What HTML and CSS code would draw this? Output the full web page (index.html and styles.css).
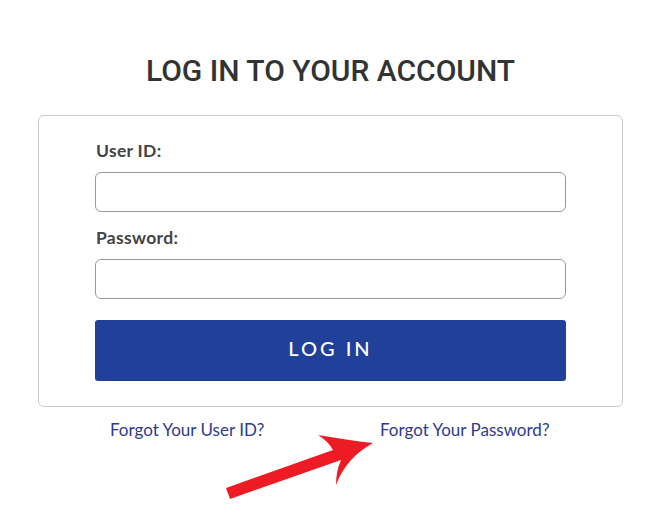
FILE: index.html
```html
<!DOCTYPE html>
<html>
<head>
<meta charset="utf-8">
<link rel="stylesheet" href="styles.css">
</head>
<body>
<div class="page">
  <h1 class="title">LOG IN TO YOUR ACCOUNT</h1>
  <form class="card">
    <label class="label" for="uid">User ID:</label>
    <input class="field" id="uid" type="text">
    <label class="label label-pw" for="pw">Password:</label>
    <input class="field" id="pw" type="password">
    <button class="btn" type="button">LOG IN</button>
  </form>
  <div class="links">
    <a class="link" href="#">Forgot Your User ID?</a>
    <a class="link" href="#">Forgot Your Password?</a>
  </div>
  <svg class="arrow" width="672" height="524" viewBox="0 0 672 524">
    <path d="M226 488 L333 450 Q 328 441 318 435 Q 347 440 373 443 Q 346 458 336 485 Q 336 471 341 460 L230 499 Z" fill="#ed1c24"/>
  </svg>
</div>
</body>
</html>
```
FILE: styles.css
```css
html, body {
  margin: 0;
  padding: 0;
  background: #fff;
}
.page {
  width: 585px;
  margin-left: 38px;
  padding-top: 51px;
}
.title {
  margin: 0 0 24px;
  text-align: center;
  font-family: Roboto, "Liberation Sans", sans-serif;
  font-weight: 500;
  font-size: 30px;
  line-height: 40px;
  color: #333;
}
.card {
  display: flex;
  flex-direction: column;
  border: 1px solid #ccc;
  border-radius: 6px;
  padding: 24px 56px 25px 56px;
  margin: 0;
}
.label {
  font-family: Lato, "Open Sans", sans-serif;
  font-weight: 700;
  font-size: 17.5px;
  letter-spacing: 0.3px;
  line-height: 22px;
  color: #444;
  padding-left: 1px;
  margin-bottom: 10px;
}
.label-pw {
  margin-top: 15px;
}
.field {
  box-sizing: border-box;
  height: 40px;
  border: 1px solid #999;
  border-radius: 6px;
  background: #fff;
  margin: 0;
  padding: 0 10px;
}
.btn {
  margin-top: 21px;
  height: 61px;
  border: 0;
  border-radius: 3px;
  background: #20409a;
  color: #fff;
  font-family: Lato, "Open Sans", sans-serif;
  font-weight: 500;
  font-size: 20px;
  letter-spacing: 3px;
  padding: 0 0 5px;
  cursor: pointer;
}
.links {
  display: grid;
  grid-template-columns: 270px auto;
  padding-left: 72px;
  padding-top: 13px;
}
.link {
  font-family: Lato, "Open Sans", sans-serif;
  font-size: 17px;
  letter-spacing: 0;
  line-height: 20px;
  color: #2f3a8c;
  text-decoration: none;
}
.arrow {
  position: absolute;
  left: 0;
  top: 0;
  pointer-events: none;
}
```
